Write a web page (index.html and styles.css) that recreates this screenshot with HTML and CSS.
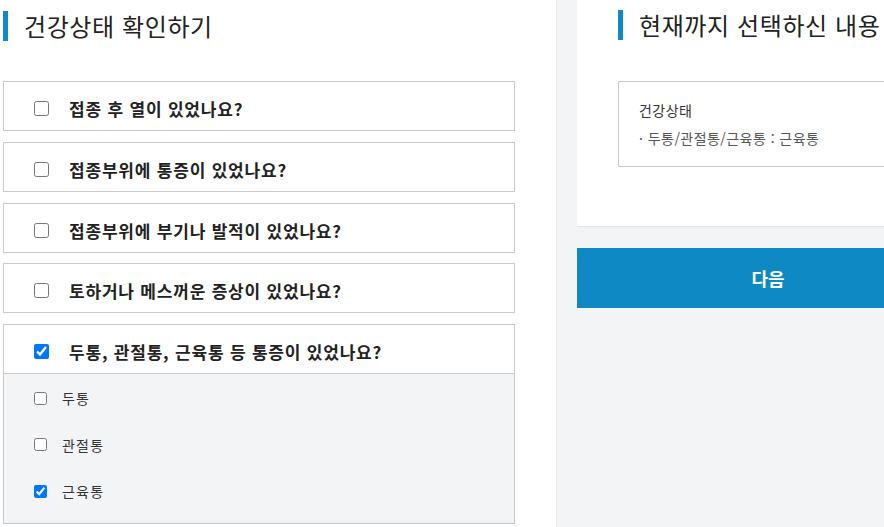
FILE: index.html
```html
<!DOCTYPE html>
<html lang="ko">
<head>
<meta charset="utf-8">
<title>건강상태 확인하기</title>
<link rel="stylesheet" href="styles.css">
</head>
<body>
<div class="page">
  <section class="left">
    <h2 class="title">건강상태 확인하기</h2>
    <ul class="questions">
      <li class="q">
        <label class="q-head"><input type="checkbox" class="q-check"><span>접종 후 열이 있었나요?</span></label>
      </li>
      <li class="q">
        <label class="q-head"><input type="checkbox" class="q-check"><span>접종부위에 통증이 있었나요?</span></label>
      </li>
      <li class="q">
        <label class="q-head"><input type="checkbox" class="q-check"><span>접종부위에 부기나 발적이 있었나요?</span></label>
      </li>
      <li class="q">
        <label class="q-head"><input type="checkbox" class="q-check"><span>토하거나 메스꺼운 증상이 있었나요?</span></label>
      </li>
      <li class="q open">
        <label class="q-head"><input type="checkbox" class="q-check" checked><span>두통, 관절통, 근육통 등 통증이 있었나요?</span></label>
        <div class="sub">
          <label class="sub-row"><input type="checkbox" class="s-check"><span>두통</span></label>
          <label class="sub-row"><input type="checkbox" class="s-check"><span>관절통</span></label>
          <label class="sub-row"><input type="checkbox" class="s-check" checked><span>근육통</span></label>
        </div>
      </li>
    </ul>
  </section>
  <aside class="right">
    <div class="summary">
      <h2 class="title">현재까지 선택하신 내용</h2>
      <div class="summary-box">
        <p class="summary-label">건강상태</p>
        <p class="summary-item">· 두통/관절통/근육통 : 근육통</p>
      </div>
    </div>
    <button class="next" type="button">다음</button>
  </aside>
</div>
</body>
</html>
```

FILE: styles.css
```css
html, body {
  margin: 0;
  padding: 0;
  overflow: hidden;
}
body {
  background: #f3f4f6;
  font-family: "Noto Sans CJK KR", "Noto Sans", sans-serif;
  color: #222;
}
.page {
  display: flex;
  align-items: flex-start;
  width: 1000px;
  height: 527px;
}
.left {
  box-sizing: border-box;
  width: 557px;
  flex-shrink: 0;
  height: 527px;
  background: #fff;
  border-right: 1px solid #e9ebee;
  padding: 11px 41px 0 3px;
}
.title {
  margin: 0;
  height: 30px;
  display: flex;
  align-items: center;
  border-left: 5px solid #0f89c3;
  padding-left: 16px;
  font-size: 24px;
  font-weight: 400;
  color: #222;
  line-height: 30px;
  letter-spacing: 0.6px;
  white-space: nowrap;
}
.questions {
  list-style: none;
  margin: 40px 0 0;
  padding: 0;
  display: flex;
  flex-direction: column;
  gap: 10.75px;
}
.q {
  border: 1px solid #c9c9c9;
  background: #fff;
}
.q-head {
  box-sizing: border-box;
  height: 48px;
  display: flex;
  align-items: center;
  padding: 5px 0 0 30px;
  font-size: 17px;
  font-weight: 700;
  color: #222;
  letter-spacing: 0.8px;
}
.q-check {
  width: 15px;
  height: 15px;
  margin: 0 20px 0 0;
}
.open .q-head {
  border-bottom: 1px solid #c9c9c9;
  height: 49px;
}
.sub {
  background: #f3f4f6;
  padding: 1px 0 8px;
}
.sub-row {
  height: 46.5px;
  display: flex;
  align-items: center;
  padding-left: 30px;
  font-size: 14px;
  color: #333;
  letter-spacing: 1.2px;
}
.s-check {
  width: 13px;
  height: 13px;
  margin: 0 15px 0 0;
}
.right {
  width: 382px;
  flex-shrink: 0;
  margin-left: 20px;
}
.summary {
  background: #fff;
  border-bottom: 1px solid #e5e7eb;
  padding: 10px 0 59px 41px;
}
.summary-box {
  margin-top: 41px;
  border: 1px solid #c9c9c9;
  padding: 14px 20px;
  font-size: 14px;
  line-height: 28px;
  color: #333;
  letter-spacing: 0.45px;
}
.summary-box p {
  margin: 0;
}
.summary-item {
  color: #555;
}
.next {
  display: block;
  width: 100%;
  margin-top: 21px;
  height: 60px;
  border: 0;
  background: #0f89c3;
  color: #fff;
  font-family: inherit;
  font-size: 18px;
  font-weight: 700;
}
```
